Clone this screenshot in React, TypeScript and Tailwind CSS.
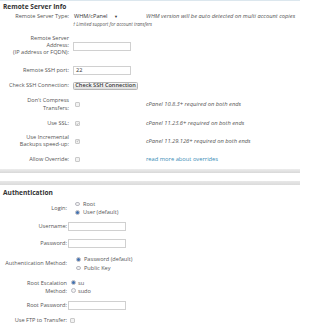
function Checkbox({ checked = false }: { checked?: boolean }) {
  return (
    <span className="flex h-[5px] w-[5px] items-center justify-center rounded-[1px] border-[0.5px] border-[#c9c9c9] bg-[#f2f2f2]">
      {checked && (
        <svg viewBox="0 0 10 10" className="h-[4px] w-[4px]">
          <path d="M2 5.5 L4.2 7.6 L8 2.6" fill="none" stroke="#777" strokeWidth="1.5" />
        </svg>
      )}
    </span>
  );
}

function Radio({ checked = false }: { checked?: boolean }) {
  return (
    <span className="flex h-[4.5px] w-[4.5px] items-center justify-center rounded-full border-[0.5px] border-[#b8b8c0] bg-[#f2f2f2]">
      {checked && <span className="h-[2.8px] w-[2.8px] rounded-full bg-[#3f6fae]" />}
    </span>
  );
}

function TextBox({ value = "" }: { value?: string }) {
  return (
    <div className="flex h-[9px] w-[58px] items-center border-[0.5px] border-[#d0d0d0] bg-white pl-[2px] text-[#333]">
      {value}
    </div>
  );
}

function Note({ children }: { children: React.ReactNode }) {
  return <span className="whitespace-nowrap text-[5.75px] italic text-[#555]">{children}</span>;
}

export default function App() {
  return (
    <div className="h-[333px] w-[300px] overflow-hidden bg-white font-['Open_Sans','Liberation_Sans',sans-serif] text-[5.6px] leading-[7px] text-[#555]">
      {/* Remote Server Info */}
      <div className="border-t border-[#dce7ee]">
        <div className="flex h-[10px] items-center pl-[3px] text-[6.6px] font-bold text-[#333]">
          Remote Server Info
        </div>

        <div className="flex h-[18px] items-start">
          <div className="w-[70px] pr-[1px] pt-[2px] text-right">Remote Server Type:</div>
          <div className="ml-[3px] flex w-[73px] flex-col pt-[1.5px]">
            <div className="flex h-[7px] w-[47px] items-center justify-between pl-[1px] pr-[2px] text-[#333]">
              <span>WHM/cPanel</span>
              <span className="text-[4px]">▼</span>
            </div>
            <span className="mt-[1.5px] whitespace-nowrap text-[4.6px] italic text-[#555]">
              † Limited support for account transfers
            </span>
          </div>
          <div className="pt-[2px]">
            <Note>WHM version will be auto detected on multi account copies</Note>
          </div>
        </div>

        <div className="flex h-[33px] items-center">
          <div className="w-[70px] pr-[1px] text-right leading-[7.3px]">
            Remote Server
            <br />
            Address:
            <br />
            (IP address or FQDN):
          </div>
          <div className="ml-[3px] pt-[1px]">
            <TextBox />
          </div>
        </div>

        <div className="flex h-[16px] items-center">
          <div className="w-[70px] pr-[1px] text-right">Remote SSH port:</div>
          <div className="ml-[3px]">
            <TextBox value="22" />
          </div>
        </div>

        <div className="flex h-[15px] items-center">
          <div className="w-[70px] pr-[1px] text-right">Check SSH Connection:</div>
          <button className="ml-[3px] flex h-[8px] w-[65px] items-center justify-center rounded-[1.5px] border-[0.5px] border-[#b5b5b5] bg-gradient-to-b from-[#fafafa] to-[#dedede] font-semibold text-[#3a3a3a]">
            Check SSH Connection
          </button>
        </div>

        <div className="flex h-[23px] items-center">
          <div className="w-[70px] pr-[1px] text-right leading-[7.5px]">
            Don&apos;t Compress
            <br />
            Transfers:
          </div>
          <div className="ml-[5px] w-[71px]">
            <Checkbox />
          </div>
          <Note>cPanel 10.8.3+ required on both ends</Note>
        </div>

        <div className="flex h-[15px] items-center">
          <div className="w-[70px] pr-[1px] text-right">Use SSL:</div>
          <div className="ml-[5px] w-[71px]">
            <Checkbox checked />
          </div>
          <Note>cPanel 11.23.6+ required on both ends</Note>
        </div>

        <div className="flex h-[20px] items-center">
          <div className="w-[70px] pr-[1px] text-right leading-[7.5px]">
            Use Incremental
            <br />
            Backups speed-up:
          </div>
          <div className="ml-[5px] w-[71px]">
            <Checkbox checked />
          </div>
          <Note>cPanel 11.29.126+ required on both ends</Note>
        </div>

        <div className="flex h-[16px] items-center">
          <div className="w-[70px] pr-[1px] text-right">Allow Override:</div>
          <div className="ml-[5px] w-[71px]">
            <Checkbox />
          </div>
          <a className="whitespace-nowrap text-[5.75px] text-[#3b8db6]">read more about overrides</a>
        </div>
      </div>

      {/* section divider */}
      <div className="mt-[2px] h-[4px] bg-gradient-to-b from-[#ededed] to-[#d8d8d8]" />
      <div className="h-[8px]" />
      <div className="h-[4px] bg-gradient-to-b from-[#e8e8e8] to-[#dbdbdb]" />

      {/* Authentication */}
      <div>
        <div className="flex h-[14px] items-center pl-[3px] text-[6.6px] font-bold text-[#333]">
          Authentication
        </div>

        <div className="flex h-[18px] items-center">
          <div className="w-[67px] text-right">Login:</div>
          <div className="ml-[8px] flex flex-col leading-[8.5px]">
            <div className="flex items-center gap-[3.5px]">
              <Radio />
              <span>Root</span>
            </div>
            <div className="flex items-center gap-[3.5px]">
              <Radio checked />
              <span>User (default)</span>
            </div>
          </div>
        </div>

        <div className="flex h-[18px] items-center">
          <div className="w-[67px] text-right">Username:</div>
          <div className="ml-[1px]">
            <TextBox />
          </div>
        </div>

        <div className="flex h-[16px] items-center">
          <div className="w-[67px] text-right">Password:</div>
          <div className="ml-[1px]">
            <TextBox />
          </div>
        </div>

        <div className="flex h-[25px] items-center">
          <div className="w-[67px] text-right">Authentication Method:</div>
          <div className="ml-[9px] flex flex-col leading-[8.5px]">
            <div className="flex items-center gap-[3.5px]">
              <Radio checked />
              <span>Password (default)</span>
            </div>
            <div className="flex items-center gap-[3.5px]">
              <Radio />
              <span>Public Key</span>
            </div>
          </div>
        </div>

        <div className="flex h-[21px] items-center leading-[8px]">
          <div className="w-[67px] text-right">
            Root Escalation
            <br />
            Method:
          </div>
          <div className="ml-[4px] flex flex-col">
            <div className="flex items-center gap-[2.5px]">
              <Radio checked />
              <span>su</span>
            </div>
            <div className="flex items-center gap-[2.5px]">
              <Radio />
              <span>sudo</span>
            </div>
          </div>
        </div>

        <div className="flex h-[16px] items-center">
          <div className="w-[67px] text-right">Root Password:</div>
          <div className="ml-[1px]">
            <TextBox />
          </div>
        </div>

        <div className="flex h-[14px] items-center">
          <div className="w-[67px] text-right">Use FTP to Transfer:</div>
          <div className="ml-[3px]">
            <Checkbox />
          </div>
        </div>
      </div>
    </div>
  );
}
